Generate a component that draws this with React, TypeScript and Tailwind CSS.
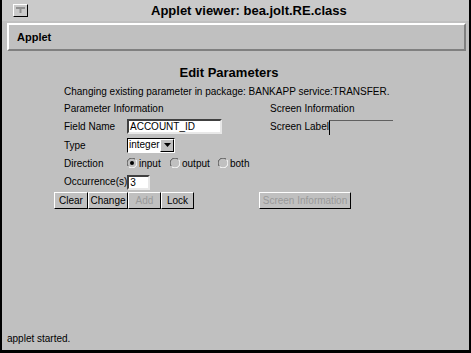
const raised = 'border-t border-l border-t-white border-l-white border-b border-r border-b-black border-r-black';

function Radio({ checked }: { checked?: boolean }) {
  return (
    <svg width="10" height="10" viewBox="0 0 10 10" className="shrink-0">
      <path d="M8.5 1.5 A4.5 4.5 0 0 0 1.5 8.5" fill="none" stroke="#505050" strokeWidth="1" />
      <path d="M1.5 8.5 A4.5 4.5 0 0 0 8.5 1.5" fill="none" stroke="#ffffff" strokeWidth="1" />
      {checked && <circle cx="5" cy="5" r="2" fill="#000" />}
    </svg>
  );
}

function Btn({ label, disabled, w }: { label: string; disabled?: boolean; w: string }) {
  return (
    <div
      className={`${w} h-[17px] flex items-center justify-center whitespace-nowrap text-[10px] ${raised} ${
        disabled ? 'text-[#9a9a9a]' : 'text-black'
      }`}
    >
      {label}
    </div>
  );
}

export default function App() {
  return (
    <div className="w-[471px] h-[353px] bg-[#c0c0c0] border-x-2 border-b-[3px] border-black flex flex-col overflow-hidden font-['Liberation_Sans',Arial,sans-serif] text-black">
      {/* Title bar */}
      <div className="h-[21px] shrink-0 bg-[#cacaca] flex items-center">
        <div className={`ml-[11px] w-[15px] h-[13px] flex items-center justify-center ${raised} border-b-[#808080] border-r-[#808080]`}>
          <svg width="9" height="7" viewBox="0 0 9 7">
            <rect x="0" y="0" width="9" height="2" fill="#909090" />
            <rect x="3.5" y="2" width="2" height="4" fill="#909090" />
          </svg>
        </div>
        <div className="ml-[123px] text-[13px] font-bold leading-none">
          Applet viewer: bea.jolt.RE.class
        </div>
      </div>

      {/* Menu bar */}
      <div className="mt-[2px] ml-[5px] w-[459px] h-[28px] shrink-0 border-2 border-t-white border-l-white border-b-[#808080] border-r-[#808080] flex items-center">
        <span className="ml-[8px] text-[11px] font-bold">Applet</span>
      </div>

      {/* Panel */}
      <div className="ml-[52px] w-[350px] mt-[13px] flex flex-col text-[10px]">
        <div className="h-[18px] flex items-center justify-center text-[13px] font-bold">Edit Parameters</div>

        <div className="pl-[10px] flex flex-col">
          <div className="h-[18px] flex items-center whitespace-nowrap">
            Changing existing parameter in package: BANKAPP service:TRANSFER.
          </div>

          <div className="h-[17px] flex items-center whitespace-nowrap">
            <div className="w-[206px] shrink-0">Parameter Information</div>
            <div>Screen Information</div>
          </div>

          <div className="h-[19px] flex items-center whitespace-nowrap">
            <div className="w-[206px] shrink-0 flex items-center">
              <div className="w-[63px] shrink-0">Field Name</div>
              <div className="w-[95px] h-[15px] bg-white border-2 border-t-[#404040] border-l-[#404040] border-b-[#e8e8e8] border-r-[#e8e8e8] flex items-center pl-[1px] leading-none">
                ACCOUNT_ID
              </div>
            </div>
            <div className="flex items-center">
              <div className="shrink-0">Screen Label</div>
              <div className="w-[64px] h-[15px] mt-[2px] border-t border-l border-t-[#606060] border-l-black" />
            </div>
          </div>

          <div className="h-[18px] flex items-center">
            <div className="w-[63px] shrink-0">Type</div>
            <div className="w-[48px] h-[15px] flex border-t border-l border-t-black border-l-black border-b border-r border-b-white border-r-white">
              <div className="w-[32px] bg-white flex items-center pl-[1px] leading-none">integer</div>
              <div className={`flex-1 flex items-center justify-center ${raised} border-b-[#606060] border-r-[#606060]`}>
                <svg width="7" height="4" viewBox="0 0 7 4">
                  <path d="M0 0 L7 0 L3.5 4 Z" fill="#000" />
                </svg>
              </div>
            </div>
          </div>

          <div className="h-[18px] flex items-center whitespace-nowrap">
            <div className="w-[63px] shrink-0">Direction</div>
            <div className="w-[43px] shrink-0 flex items-center gap-[2px]">
              <Radio checked />
              <span>input</span>
            </div>
            <div className="w-[48px] shrink-0 flex items-center gap-[2px]">
              <Radio />
              <span>output</span>
            </div>
            <div className="flex items-center gap-[2px]">
              <Radio />
              <span>both</span>
            </div>
          </div>

          <div className="h-[18px] flex items-center whitespace-nowrap">
            <div className="shrink-0">Occurrence(s)</div>
            <div className="w-[23px] h-[15px] mt-[3px] bg-white border-2 border-t-[#404040] border-l-[#404040] border-b-[#e8e8e8] border-r-[#e8e8e8] flex items-center pl-[1px] leading-none">
              3
            </div>
          </div>
        </div>

        <div className="mt-[2px] flex items-center">
          <Btn label="Clear" w="w-[34px]" />
          <Btn label="Change" w="w-[40px]" />
          <Btn label="Add" w="w-[33px]" disabled />
          <Btn label="Lock" w="w-[33px]" />
          <div className="ml-[65px]">
            <Btn label="Screen Information" w="w-[92px]" disabled />
          </div>
        </div>
      </div>

      {/* Status */}
      <div className="mt-auto mb-[5px] ml-[5px] h-[14px] flex items-center text-[10px]">applet started.</div>
    </div>
  );
}
